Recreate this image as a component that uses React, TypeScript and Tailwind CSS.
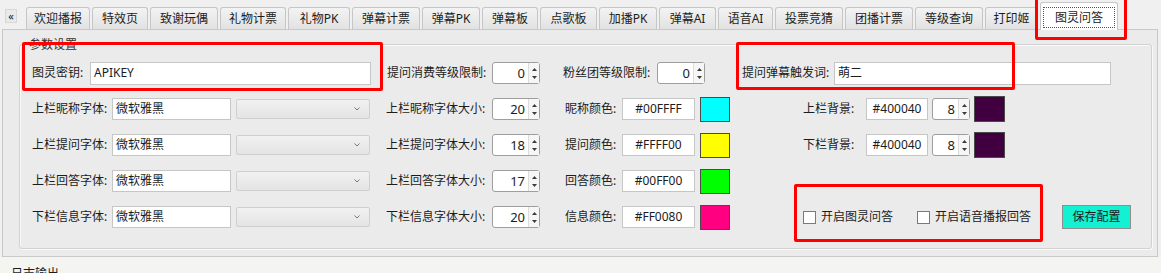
import React from 'react'

const tabs: [string, string][] = [
  ['欢迎播报', 'w-[64px]'],
  ['特效页', 'w-[56px]'],
  ['致谢玩偶', 'w-[68px]'],
  ['礼物计票', 'w-[66px]'],
  ['礼物PK', 'w-[62px]'],
  ['弹幕计票', 'w-[68px]'],
  ['弹幕PK', 'w-[58px]'],
  ['弹幕板', 'w-[56px]'],
  ['点歌板', 'w-[57px]'],
  ['加播PK', 'w-[58px]'],
  ['弹幕AI', 'w-[57px]'],
  ['语音AI', 'w-[55px]'],
  ['投票竞猜', 'w-[68px]'],
  ['团播计票', 'w-[68px]'],
  ['等级查询', 'w-[68px]'],
  ['打印姬', 'w-[53px]'],
]

const rows = [
  { font: '上栏昵称字体:', size: '上栏昵称字体大小:', sv: '20', color: '昵称颜色:', hex: '#00FFFF', sw: 'bg-[#00ffff]' },
  { font: '上栏提问字体:', size: '上栏提问字体大小:', sv: '18', color: '提问颜色:', hex: '#FFFF00', sw: 'bg-[#ffff00]' },
  { font: '上栏回答字体:', size: '上栏回答字体大小:', sv: '17', color: '回答颜色:', hex: '#00FF00', sw: 'bg-[#00ff00]' },
  { font: '下栏信息字体:', size: '下栏信息字体大小:', sv: '20', color: '信息颜色:', hex: '#FF0080', sw: 'bg-[#ff0080]' },
]

function Spin({ value, w }: { value: string; w: string }) {
  return (
    <div className={`flex h-[22px] ${w} items-stretch rounded-[3px] border border-[#9e9e9e] bg-white`}>
      <span className="flex flex-1 items-center justify-end pr-[3px] text-[13px]">{value}</span>
      <span className="flex w-[11px] flex-col items-center justify-center gap-[5px] border-l border-[#dcdcdc] bg-[#f6f6f6]">
        <svg width="5" height="3" viewBox="0 0 5 3"><path d="M0 3L2.5 0L5 3Z" fill="#3a3a3a" /></svg>
        <svg width="5" height="3" viewBox="0 0 5 3"><path d="M0 0L2.5 3L5 0Z" fill="#3a3a3a" /></svg>
      </span>
    </div>
  )
}

function TextBox({ value, w, center }: { value: string; w: string; center?: boolean }) {
  return (
    <div className={`flex h-[22px] ${w} items-center border border-[#c6c6c6] bg-white ${center ? 'justify-center' : 'pl-[3px]'}`}>
      {value}
    </div>
  )
}

function Combo() {
  return (
    <div className="ml-[5px] flex h-[20px] w-[134px] items-center justify-end rounded-[2px] border border-[#cfcfcf] bg-linear-to-b from-[#f1f1f1] to-[#e4e4e4] pr-[9px]">
      <svg width="6" height="4" viewBox="0 0 6 4"><path d="M0.5 0.5L3 3L5.5 0.5" stroke="#777" fill="none" /></svg>
    </div>
  )
}

function Check({ label, w }: { label: string; w: string }) {
  return (
    <div className={`flex ${w} items-center`}>
      <span className="h-[13px] w-[13px] border border-[#7a7a7a] bg-white" />
      <span className="ml-[5px]">{label}</span>
    </div>
  )
}

export default function App() {
  return (
    <div className="relative h-[273px] w-[1161px] overflow-hidden bg-[#f0f0f0] font-['Noto_Sans','Noto_Sans_CJK_SC',sans-serif] text-[12px] leading-[16px] text-[#1c1c1c]">
      {/* tab strip */}
      <div className="flex h-[29px] items-end">
        <div className="ml-[5px] flex h-[14px] w-[12px] items-center justify-center self-start mt-[9px] border border-[#d6d6d6] bg-[#e9e9e9] text-[11px] leading-[10px]">
          «
        </div>
        <div className="ml-[9px] flex items-end gap-[2px]">
          {tabs.map(([t, w]) => (
            <div
              key={t}
              className={`flex h-[22px] ${w} items-center justify-center rounded-t-[3px] border border-b-0 border-[#c6c6c6] bg-linear-to-b from-[#f3f3f3] to-[#e2e2e2]`}
            >
              {t}
            </div>
          ))}
          <div className="relative z-10 -mb-px flex h-[28px] w-[78px] justify-center rounded-t-[3px] border border-b-0 border-[#c6c6c6] bg-white pt-[4px]">
            <span className="flex h-[21px] w-[72px] items-center justify-center border border-dotted border-[#555]">图灵问答</span>
          </div>
        </div>
      </div>

      {/* tab pane */}
      <div className="ml-[2px] h-[228px] w-[1156px] border border-[#c9c9c9] bg-[#ebebeb]">
        <div className="relative ml-[16px] mt-[14px] flex h-[205px] w-[1133px] flex-col gap-[12px] rounded-[3px] border border-[#d2d2d2] pl-[12px] pt-[16px] shadow-[inset_1px_1px_0_#f9f9f9,1px_1px_0_#f9f9f9]">
          <span className="absolute left-[8px] top-[-8px] bg-[#ebebeb] px-[1px] text-[#333]">参数设置</span>

          <div className="flex h-[24px] items-center">
            <span className="w-[58px]">图灵密钥:</span>
            <div className="flex h-[23px] w-[281px] items-center border border-[#c6c6c6] bg-white pl-[3px]">APIKEY</div>
            <span className="ml-[16px] w-[105px]">提问消费等级限制:</span>
            <Spin value="0" w="w-[48px]" />
            <span className="ml-[23px] w-[94px]">粉丝团等级限制:</span>
            <Spin value="0" w="w-[48px]" />
            <span className="ml-[37px] w-[92px]">提问弹幕触发词:</span>
            <div className="flex h-[23px] w-[277px] items-center border border-[#c6c6c6] bg-white pl-[3px]">萌二</div>
          </div>

          {rows.map((r, i) => (
            <div key={r.font} className="flex h-[24px] items-center">
              <span className="w-[80px]">{r.font}</span>
              <TextBox value="微软雅黑" w="w-[119px]" />
              <Combo />
              <span className="ml-[16px] w-[106px]">{r.size}</span>
              <Spin value={r.sv} w="w-[48px]" />
              <span className="ml-[25px] w-[57px]">{r.color}</span>
              <TextBox value={r.hex} w="w-[73px]" center />
              <span className={`ml-[5px] h-[25px] w-[30px] border border-[#4a4a4a] ${r.sw}`} />
              {i < 2 && (
                <>
                  <span className="ml-[73px] w-[63px]">{i === 0 ? '上栏背景:' : '下栏背景:'}</span>
                  <TextBox value="#400040" w="w-[62px]" center />
                  <div className="ml-[4px]">
                    <Spin value="8" w="w-[38px]" />
                  </div>
                  <span className="ml-[4px] h-[26px] w-[31px] border border-[#4a4a4a] bg-[#400040]" />
                </>
              )}
              {i === 3 && (
                <>
                  <div className="ml-[73px] flex items-center">
                    <Check label="开启图灵问答" w="w-[114px]" />
                    <Check label="开启语音播报回答" w="w-[145px]" />
                  </div>
                  <button className="flex h-[24px] w-[69px] items-center justify-center border border-[#8e8e8e] bg-[#14f0d2] text-[#1c1c1c]">
                    保存配置
                  </button>
                </>
              )}
            </div>
          ))}
        </div>
      </div>

      {/* log area below */}
      <div className="h-[16px] bg-[#f4f4f0] pl-[11px] pt-[9px]">日志输出</div>

      {/* red annotation boxes */}
      <div className="pointer-events-none absolute left-[22px] top-[42px] h-[49px] w-[361px] rounded-[2px] border-[3px] border-[#ff0000]" />
      <div className="pointer-events-none absolute left-[736px] top-[42px] h-[48px] w-[279px] rounded-[2px] border-[3px] border-[#ff0000]" />
      <div className="pointer-events-none absolute left-[794px] top-[184px] h-[58px] w-[249px] rounded-[2px] border-[3px] border-[#ff0000]" />
      <div className="pointer-events-none absolute left-[1035px] top-[-3px] h-[43px] w-[92px] rounded-[2px] border-[3px] border-[#ff0000]" />
    </div>
  )
}
